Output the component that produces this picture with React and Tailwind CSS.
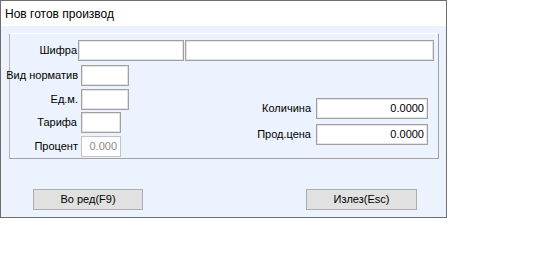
import React from 'react'

const font = { fontFamily: '"Liberation Sans", Arial, sans-serif' }

function Field({ w, value, disabled }) {
  return (
    <div
      className={`h-[21px] flex items-center justify-end pr-[3px] text-[11px] bg-white border ${
        disabled ? 'border-[#c4c4c4] text-[#8a8a8a]' : 'border-[#a0a0a0] shadow-[inset_0_0_0_1px_#e3e3e3] text-black'
      }`}
      style={{ width: w }}
    >
      {value}
    </div>
  )
}

function Row({ label, labelW = 68, gap = 3, children, className = '' }) {
  return (
    <div className={`flex items-center ${className}`}>
      <div className="flex justify-end whitespace-nowrap text-[11px] text-black shrink-0" style={{ width: labelW, marginRight: gap }}>
        {label}
      </div>
      {children}
    </div>
  )
}

function Button({ children, w }) {
  return (
    <div
      className="h-[21px] flex items-center justify-center bg-[#e1e1e1] border border-[#adadad] text-[11px] text-black"
      style={{ width: w }}
    >
      {children}
    </div>
  )
}

export default function App() {
  return (
    <div className="w-[540px] h-[266px] bg-white" style={font}>
      <div className="w-[447px] h-[218px] border border-[#6e6e6e] flex flex-col">
        <div className="h-[25px] shrink-0 bg-white pl-[4px] flex items-center text-[12px] text-black">
          Нов готов производ
        </div>
        <div className="flex-1 bg-[#ecf3fe] pl-[8px] pt-[7px]">
          <div className="w-[430px] h-[126px] border-t border-t-white border-l border-l-[#b4b4b4] border-r border-r-[#a0a0a0] border-b border-b-[#a0a0a0] pt-[6px]">
            <Row label="Шифра" labelW={67} gap={1}>
              <Field w={106} />
              <div className="w-[1px]" />
              <Field w={249} />
            </Row>
            <div className="flex">
              <div className="flex flex-col">
                <Row label="Вид норматив" className="mt-[4px]">
                  <Field w={48} />
                </Row>
                <Row label="Ед.м." className="mt-[3px]">
                  <Field w={48} />
                </Row>
                <Row label="Тарифа" labelW={67} gap={4} className="mt-[2px]">
                  <Field w={40} />
                </Row>
                <Row label="Процент" className="mt-[3px]">
                  <Field w={40} value="0.000" disabled />
                </Row>
              </div>
              <div className="flex flex-col ml-auto mr-[10px] mt-[37px]">
                <Row label="Количина" labelW={70} gap={5}>
                  <Field w={112} value="0.0000" />
                </Row>
                <Row label="Прод.цена" labelW={70} gap={5} className="mt-[5px]">
                  <Field w={112} value="0.0000" />
                </Row>
              </div>
            </div>
          </div>
          <div className="flex mt-[30px] pl-[24px]">
            <Button w={110}>Во ред(F9)</Button>
            <div className="w-[163px]" />
            <Button w={111}>Излез(Esc)</Button>
          </div>
        </div>
      </div>
    </div>
  )
}
